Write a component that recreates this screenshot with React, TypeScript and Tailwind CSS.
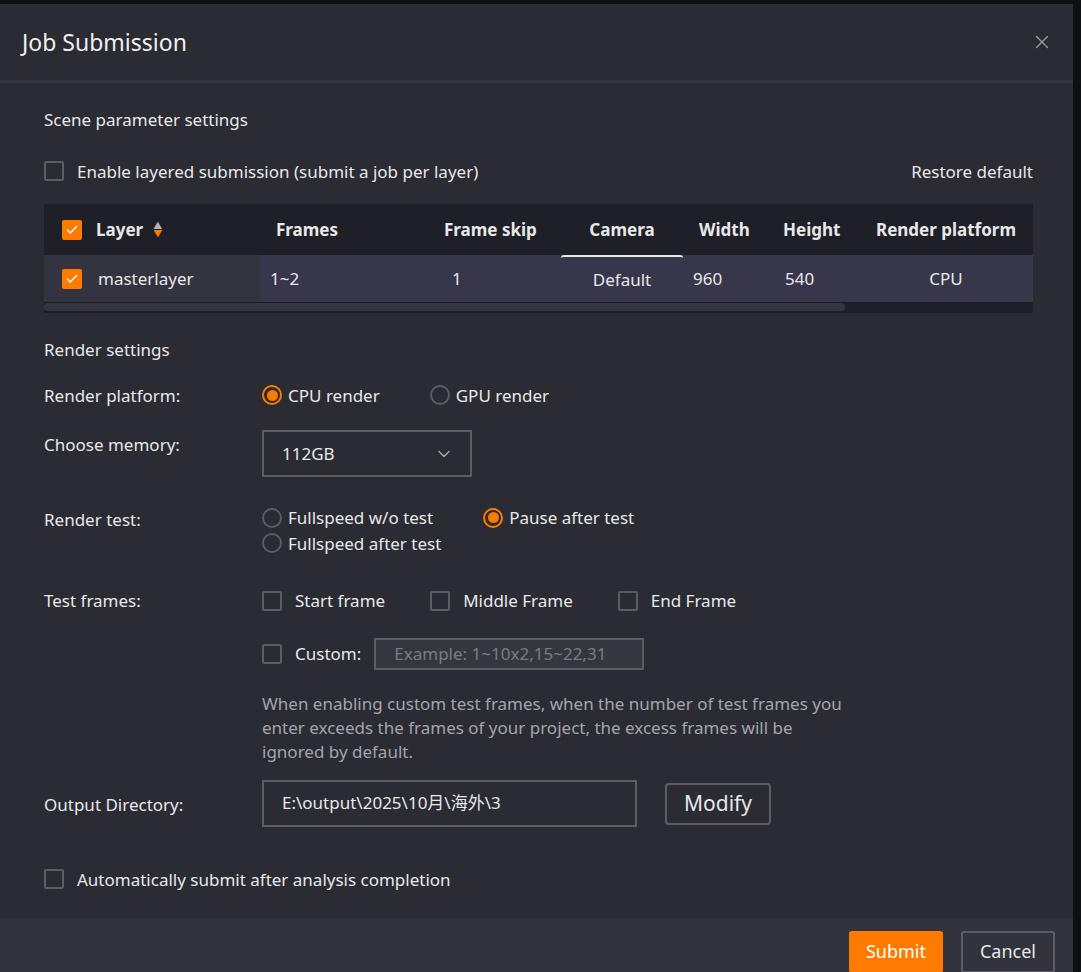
import { Check, ChevronDown, X } from 'lucide-react'

const font = { fontFamily: '"Noto Sans", "Noto Sans CJK SC", sans-serif' }

function Box({ checked = false }: { checked?: boolean }) {
  return checked ? (
    <span className="flex h-[20px] w-[20px] items-center justify-center rounded-[2px] bg-[#ff7b00]">
      <Check className="h-[14px] w-[14px] text-white" strokeWidth={2.5} />
    </span>
  ) : (
    <span className="h-[20px] w-[20px] rounded-[2px] border-2 border-[#5c5d63]" />
  )
}

function Radio({ on = false, label }: { on?: boolean; label: string }) {
  return (
    <span className="flex items-center gap-[6px]">
      {on ? (
        <span className="flex h-[20px] w-[20px] items-center justify-center rounded-full border-2 border-[#ff7b00]">
          <span className="h-[11px] w-[11px] rounded-full bg-[#ff7b00]" />
        </span>
      ) : (
        <span className="h-[20px] w-[20px] rounded-full border-2 border-[#5c5d63]" />
      )}
      {label}
    </span>
  )
}

export default function App() {
  return (
    <div className="min-h-[972px] bg-[#0f1014] pt-[4px] text-[17px] text-[#e8e8ea]" style={font}>
      <div className="w-[1073px] bg-[#2a2b33]">
        {/* header */}
        <div className="flex h-[79px] items-center justify-between border-b-[3px] border-[#35363d] pl-[22px] pr-[20px]">
          <span className="text-[23px] text-[#f0f0f0]">Job Submission</span>
          <X className="h-[22px] w-[22px] text-[#9a9a9f]" strokeWidth={1.5} />
        </div>

        <div className="px-[44px] pb-[26px] pr-[40px]">
          <div className="pt-[24px]">Scene parameter settings</div>
          <div className="mt-[26px] flex items-center justify-between">
            <label className="flex items-center gap-[13px]">
              <Box />
              Enable layered submission (submit a job per layer)
            </label>
            <span>Restore default</span>
          </div>

          {/* table */}
          <div className="mt-[20px] bg-[#1f2027] text-[17px]">
            <div className="flex h-[51px] items-center font-bold">
              <div className="flex h-full w-[216px] items-center gap-[14px] pl-[18px]">
                <Box checked />
                <span>Layer</span>
                <span className="-ml-[4px] flex flex-col leading-[8px]">
                  <span className="text-[9px] text-[#b5b5b5]">▲</span>
                  <span className="text-[9px] text-[#ff7b00]">▼</span>
                </span>
              </div>
              <div className="w-[168px] pl-[16px]">Frames</div>
              <div className="w-[133px] pl-[16px]">Frame skip</div>
              <div className="w-[122px] text-center">Camera</div>
              <div className="w-[84px] pl-[16px]">Width</div>
              <div className="w-[92px] pl-[16px]">Height</div>
              <div className="flex-1 text-center">Render platform</div>
            </div>
            <div className="flex h-[47px] items-center bg-[#37364a]">
              <div className="flex h-full w-[216px] items-center gap-[16px] bg-[#33343f] pl-[18px]">
                <Box checked />
                <span>masterlayer</span>
              </div>
              <div className="w-[168px] pl-[10px]">1~2</div>
              <div className="w-[133px] pl-[24px]">1</div>
              <div className="flex h-full w-[122px] items-center justify-center rounded-t-[3px] border-t-2 border-[#e8e8e8]">
                Default
              </div>
              <div className="w-[84px] pl-[10px]">960</div>
              <div className="w-[92px] pl-[18px]">540</div>
              <div className="flex-1 text-center">CPU</div>
            </div>
            <div className="h-[11px] pr-[188px] pt-[1px]">
              <div className="h-[8px] rounded-full bg-[#36373e]" />
            </div>
          </div>

          <div className="mt-[24px]">Render settings</div>

          <div className="mt-[20px] grid grid-cols-[218px_1fr] gap-y-[28px]">
            <div>Render platform:</div>
            <div className="flex gap-[50px]">
              <Radio on label="CPU render" />
              <Radio label="GPU render" />
            </div>

            <div className="-mt-[4px]">Choose memory:</div>
            <div className="-mt-[6px]">
              <div className="flex h-[47px] w-[210px] items-center justify-between border-2 border-[#5c5d63] pl-[18px] pr-[16px]">
                112GB
                <ChevronDown className="h-[20px] w-[20px] text-[#b0b0b0]" strokeWidth={1.5} />
              </div>
            </div>

            <div className="pt-[2px]">Render test:</div>
            <div className="flex flex-col">
              <div className="flex gap-[50px]">
                <Radio label="Fullspeed w/o test" />
                <Radio on label="Pause after test" />
              </div>
              <Radio label="Fullspeed after test" />
            </div>

            <div className="pt-[4px]">Test frames:</div>
            <div>
              <div className="flex gap-[45px] pt-[4px]">
                <span className="flex items-center gap-[13px]"><Box />Start frame</span>
                <span className="flex items-center gap-[13px]"><Box />Middle Frame</span>
                <span className="flex items-center gap-[13px]"><Box />End Frame</span>
              </div>
              <div className="mt-[24px] flex items-center gap-[13px]">
                <Box />
                <span>Custom:</span>
                <div className="flex h-[32px] w-[270px] items-center border-2 border-[#5c5d63] bg-[#36373e] pl-[18px] text-[#7a7b80]">
                  Example: 1~10x2,15~22,31
                </div>
              </div>
              <p className="mt-[22px] w-[595px] leading-[24px] text-[#a4a5aa]">
                When enabling custom test frames, when the number of test frames you enter exceeds the frames of your project, the excess frames will be ignored by default.
              </p>
            </div>

            <div className="pt-[0px]">Output Directory:</div>
            <div className="-mt-[12px] flex items-center gap-[28px]">
              <div className="flex h-[47px] w-[375px] items-center border-2 border-[#5c5d63] pl-[18px]">
                E:\output\2025\10月\海外\3
              </div>
              <div className="mt-[2px] flex h-[42px] items-center rounded-[4px] border-2 border-[#5c5d63] px-[17px] text-[21px]">
                Modify
              </div>
            </div>
          </div>

          <label className="mt-[40px] flex items-center gap-[13px]">
            <Box />
            Automatically submit after analysis completion
          </label>
        </div>

        {/* footer */}
        <div className="flex h-[67px] items-center justify-end gap-[18px] bg-[#32333d] pr-[18px]">
          <button className="h-[42px] rounded-[3px] bg-[#ff7b00] px-[17px] text-[18px] text-white">Submit</button>
          <button className="h-[42px] rounded-[3px] border-2 border-[#5c5d63] px-[17px] text-[18px]">Cancel</button>
        </div>
      </div>
    </div>
  )
}
